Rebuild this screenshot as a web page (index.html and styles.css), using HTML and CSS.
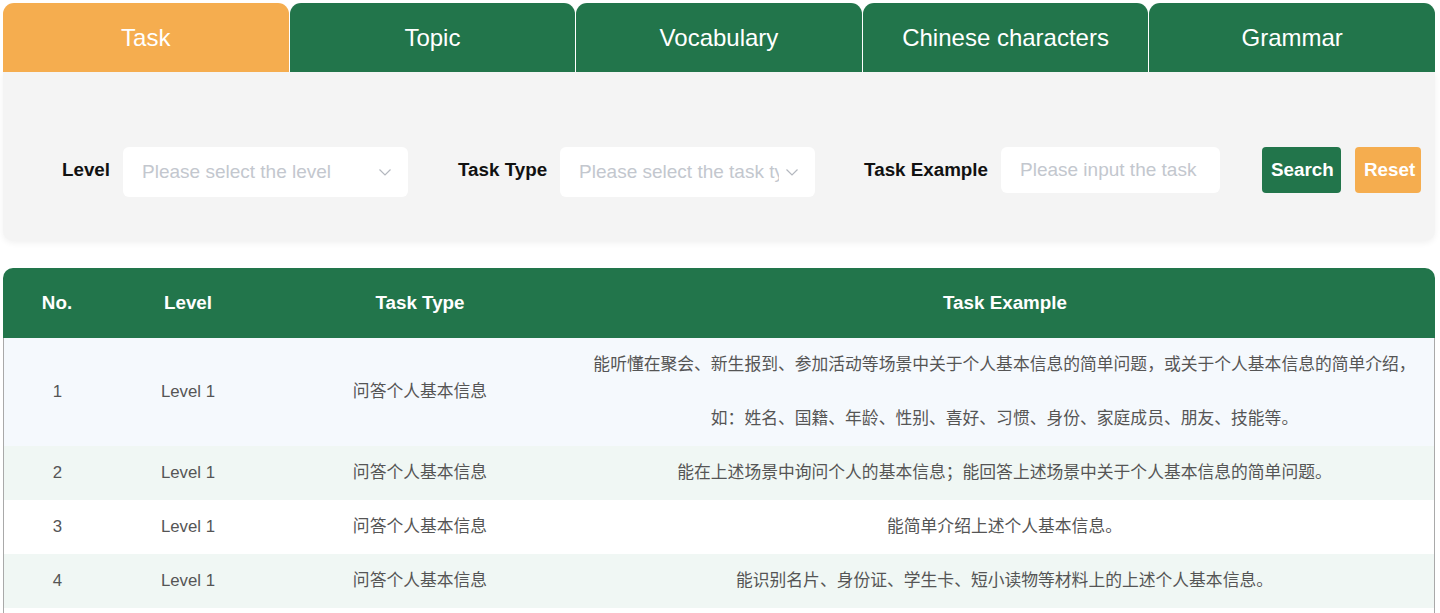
FILE: index.html
```html
<!DOCTYPE html>
<html lang="zh-cn">
<head>
  <meta charset="UTF-8">
  <title>Task</title>
  <link rel="stylesheet" href="styles.css">
</head>
<body>
  <div class="page">
    <div class="tabs">
      <div class="tab active">Task</div>
      <div class="tab">Topic</div>
      <div class="tab">Vocabulary</div>
      <div class="tab">Chinese characters</div>
      <div class="tab">Grammar</div>
    </div>

    <div class="filter">
      <label class="label">Level</label>
      <div class="select sel-level">
        <span class="placeholder">Please select the level</span>
        <svg class="arrow" width="14" height="14" viewBox="0 0 14 14"><polyline points="1.5,4.5 7,10 12.5,4.5" fill="none" stroke="#b4b8bf" stroke-width="1.2"/></svg>
      </div>
      <label class="label">Task Type</label>
      <div class="select sel-type">
        <span class="placeholder">Please select the task type</span>
        <svg class="arrow" width="14" height="14" viewBox="0 0 14 14"><polyline points="1.5,4.5 7,10 12.5,4.5" fill="none" stroke="#b4b8bf" stroke-width="1.2"/></svg>
      </div>
      <label class="label">Task Example</label>
      <div class="input">
        <span class="placeholder">Please input the task</span>
      </div>
      <button class="btn search">Search</button>
      <button class="btn reset">Reset</button>
    </div>

    <table class="grid">
      <colgroup>
        <col style="width:108px">
        <col style="width:154px">
        <col style="width:310px">
        <col>
      </colgroup>
      <thead>
        <tr>
          <th>No.</th>
          <th>Level</th>
          <th>Task Type</th>
          <th>Task Example</th>
        </tr>
      </thead>
      <tbody>
        <tr class="hover">
          <td>1</td>
          <td>Level 1</td>
          <td>问答个人基本信息</td>
          <td>能听懂在聚会、新生报到、参加活动等场景中关于个人基本信息的简单问题，或关于个人基本信息的简单介绍，<br>如：姓名、国籍、年龄、性别、喜好、习惯、身份、家庭成员、朋友、技能等。</td>
        </tr>
        <tr>
          <td>2</td>
          <td>Level 1</td>
          <td>问答个人基本信息</td>
          <td>能在上述场景中询问个人的基本信息；能回答上述场景中关于个人基本信息的简单问题。</td>
        </tr>
        <tr>
          <td>3</td>
          <td>Level 1</td>
          <td>问答个人基本信息</td>
          <td>能简单介绍上述个人基本信息。</td>
        </tr>
        <tr>
          <td>4</td>
          <td>Level 1</td>
          <td>问答个人基本信息</td>
          <td>能识别名片、身份证、学生卡、短小读物等材料上的上述个人基本信息。</td>
        </tr>
        <tr class="blank">
          <td></td>
          <td></td>
          <td></td>
          <td></td>
        </tr>
      </tbody>
    </table>
  </div>
</body>
</html>
```

FILE: styles.css
```css
body {
  margin: 0;
  background: #fff;
  font-family: 'Liberation Sans', Arial, 'Noto Sans CJK SC', sans-serif;
}
.page {
  padding: 3px 5px 0 3px;
}
.tabs {
  display: flex;
  gap: 1px;
}
.tab {
  flex: 1;
  height: 69px;
  line-height: 69px;
  text-align: center;
  font-size: 24px;
  color: #fff;
  background: #22754b;
  border-radius: 11px 11px 0 0;
}
.tab.active {
  background: #f5ad4f;
}
.filter {
  display: flex;
  align-items: flex-start;
  background: #f4f4f4;
  border-radius: 0 0 10px 10px;
  box-shadow: 0 2px 6px rgba(0,0,0,0.06);
  padding: 75px 0 44px 59px;
  height: 50px;
}
.label {
  font-size: 18.8px;
  font-weight: bold;
  color: #111;
  line-height: 46px;
  margin-right: 13px;
}
.select, .input {
  display: flex;
  align-items: center;
  background: #fff;
  border-radius: 6px;
  box-sizing: border-box;
  padding: 0 16px 0 19px;
  height: 50px;
  overflow: hidden;
}
.sel-level {
  width: 285px;
  margin-right: 50px;
}
.sel-type {
  width: 255px;
  margin-right: 49px;
}
.input {
  width: 219px;
  height: 46px;
  margin-right: 42px;
}
.placeholder {
  flex: 1;
  font-size: 19px;
  color: #c3c7ce;
  white-space: nowrap;
  overflow: hidden;
}
.arrow {
  flex: none;
  margin-left: 6px;
}
.btn {
  height: 46px;
  border: none;
  border-radius: 4px;
  font-family: inherit;
  font-size: 18.8px;
  font-weight: bold;
  color: #fff;
  padding: 0 9px;
  cursor: pointer;
}
.btn.search {
  width: 79px;
  background: #22754b;
  margin-right: 14px;
}
.btn.reset {
  width: 66px;
  background: #f5ad4f;
}
.grid {
  width: 1432px;
  margin-top: 27px;
  border-collapse: separate;
  border-spacing: 0;
  table-layout: fixed;
}
.grid th {
  background: #22754b;
  color: #fff;
  font-size: 18.8px;
  font-weight: bold;
  height: 70px;
  padding: 0;
}
.grid th:first-child {
  border-top-left-radius: 10px;
}
.grid th:last-child {
  border-top-right-radius: 10px;
}
.grid td {
  text-align: center;
  font-size: 16.8px;
  color: #555;
  line-height: 54px;
  padding: 0 12px;
}
.grid tr.blank td {
  height: 54px;
}
.grid td:first-child {
  border-left: 1px solid #a9a9a9;
}
.grid td:last-child {
  border-right: 1px solid #a9a9a9;
}
.grid tbody tr:nth-child(even) td {
  background: #f0f7f4;
}
.grid tbody tr.hover td {
  background: #f5f9fd;
}
```
